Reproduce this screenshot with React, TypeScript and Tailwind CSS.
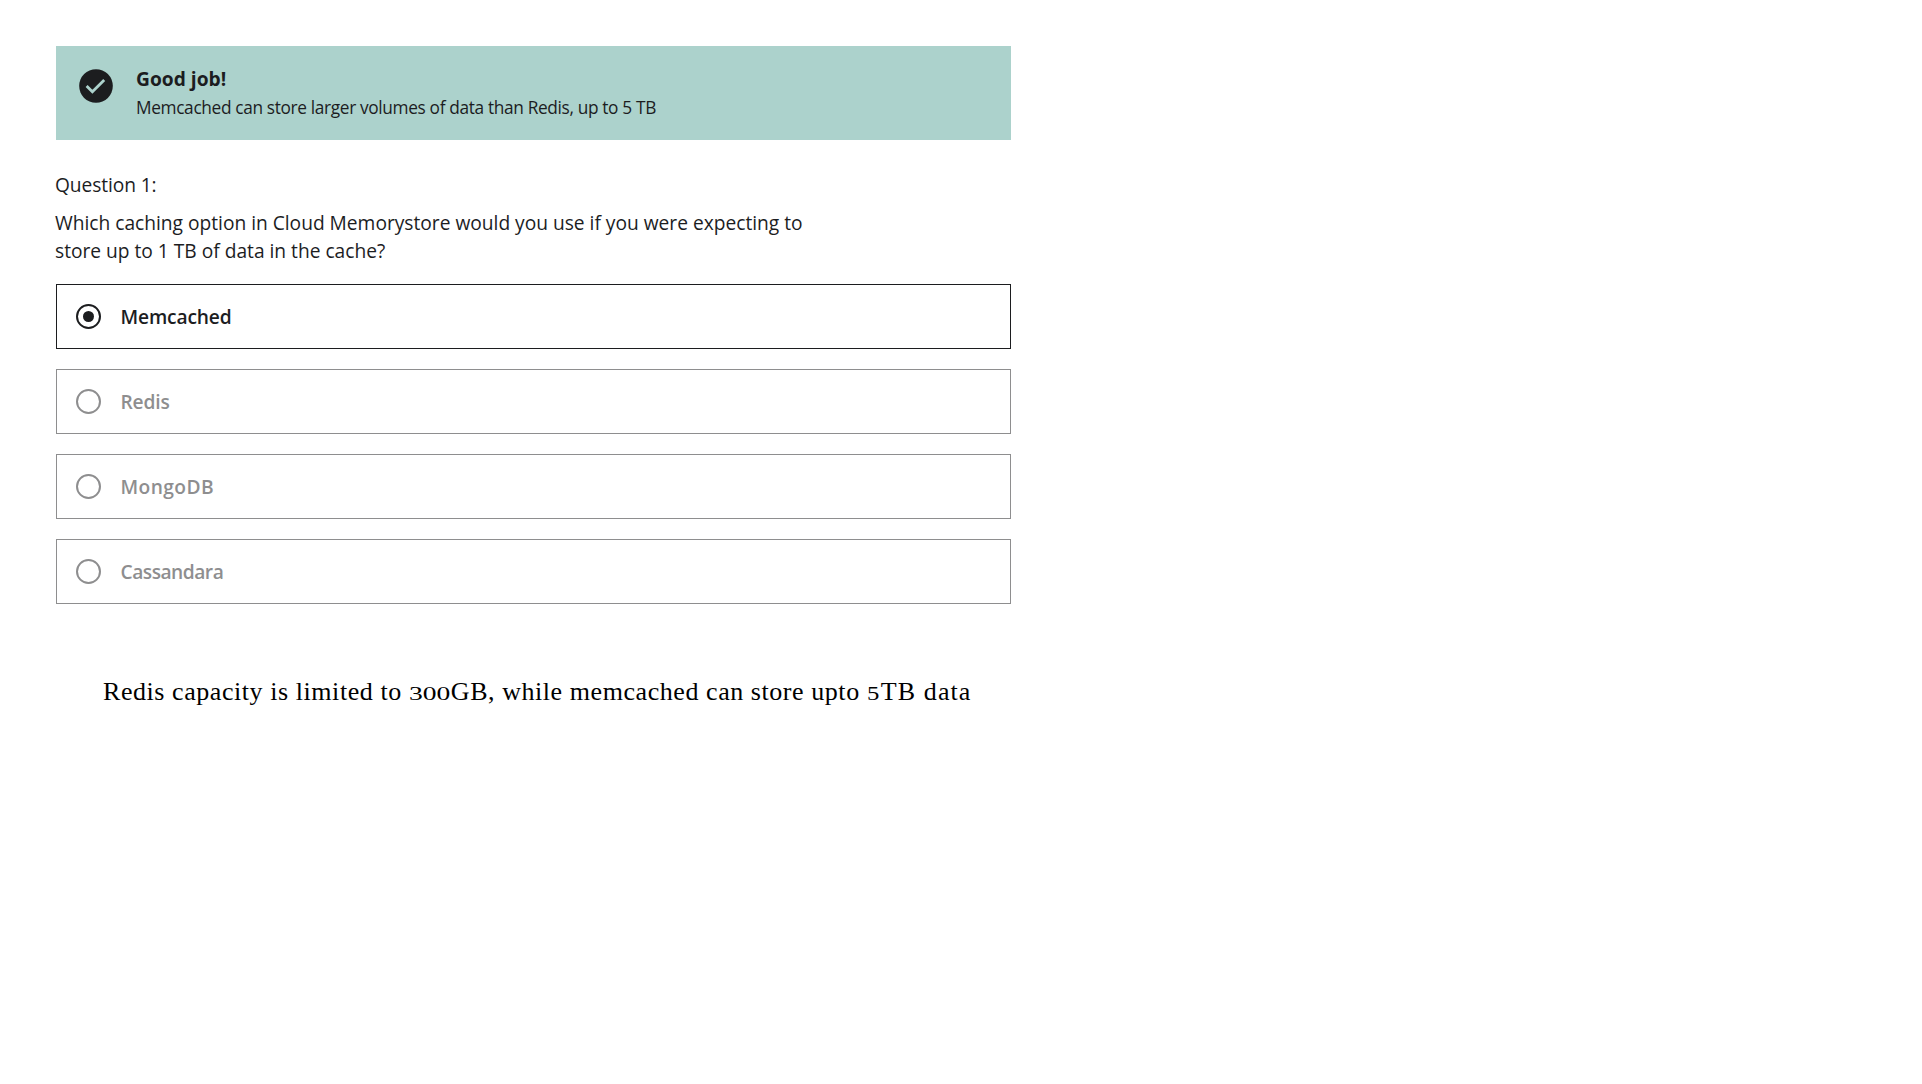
const options = [
  { label: 'Memcached', selected: true, tracking: 'tracking-[-0.15px]' },
  { label: 'Redis', selected: false, tracking: 'tracking-[-0.15px]' },
  { label: 'MongoDB', selected: false, tracking: 'tracking-[0.4px]' },
  { label: 'Cassandara', selected: false, tracking: 'tracking-[-0.5px]' },
];

function CheckCircle() {
  return (
    <svg className="mt-[23px] ml-[23px] size-[34px] shrink-0" viewBox="0 0 34 34">
      <circle cx="17" cy="17" r="16.8" fill="#1c1d1f" />
      <path d="M7.6 16.9 13.4 22.7 25.2 11" fill="none" stroke="#acd2cc" strokeWidth="2.8" />
    </svg>
  );
}

function Radio({ selected }: { selected: boolean }) {
  return (
    <span
      className={`flex size-[25px] shrink-0 items-center justify-center rounded-full border-2 ${
        selected ? 'border-[#1c1d1f]' : 'border-[#8e8e8f]'
      }`}
    >
      {selected && <span className="size-[11px] rounded-full bg-[#1c1d1f]" />}
    </span>
  );
}

export default function App() {
  return (
    <main className="min-h-screen bg-white pt-[46px] pl-14 font-['Open_Sans',sans-serif] text-[19.2px] leading-7 text-[#1c1d1f]">
      <div className="w-[955px]">
        <section className="flex h-[94px] bg-[#acd2cc]">
          <CheckCircle />
          <div className="mt-[19px] ml-[23px] whitespace-nowrap">
            <h2 className="font-bold">Good job!</h2>
            <p className="mt-[3px] text-[17.3px] leading-6 tracking-[-0.35px]">
              Memcached can store larger volumes of data than Redis, up to 5 TB
            </p>
          </div>
        </section>

        <div className="-ml-px">
          <p className="mt-[31px] tracking-[-0.1px]">Question 1:</p>
          <p className="mt-2.5 whitespace-nowrap tracking-[-0.01px]">
            Which caching option in Cloud Memorystore would you use if you were expecting to
            <br />
            store up to 1 TB of data in the cache?
          </p>
        </div>

        <ul className="mt-[19px] flex flex-col gap-5">
          {options.map(({ label, selected, tracking }) => (
            <li
              key={label}
              className={`flex h-[65px] items-center gap-[19.5px] border pl-[19px] font-semibold ${
                selected ? 'border-[#1c1d1f]' : 'border-[#8e8e8f] text-[#8e8e8f]'
              }`}
            >
              <Radio selected={selected} />
              <span className={tracking}>{label}</span>
            </li>
          ))}
        </ul>

        <p className="mt-[72px] ml-[47px] flex items-baseline font-['Liberation_Serif',serif] text-[26px] leading-8 tracking-[0.56px] whitespace-pre text-black">
          <span>Redis capacity is limited to </span>
          <span className="w-[42px] text-[19px] tracking-normal">
            <span className="inline-block origin-left scale-x-[1.45]">300</span>
          </span>
          <span>GB, while memcached can store upto </span>
          <span className="w-[14px] text-[19px] tracking-normal">
            <span className="inline-block origin-left scale-x-[1.3]">5</span>
          </span>
          <span className="tracking-[1.1px]">TB data</span>
        </p>
      </div>
    </main>
  );
}
